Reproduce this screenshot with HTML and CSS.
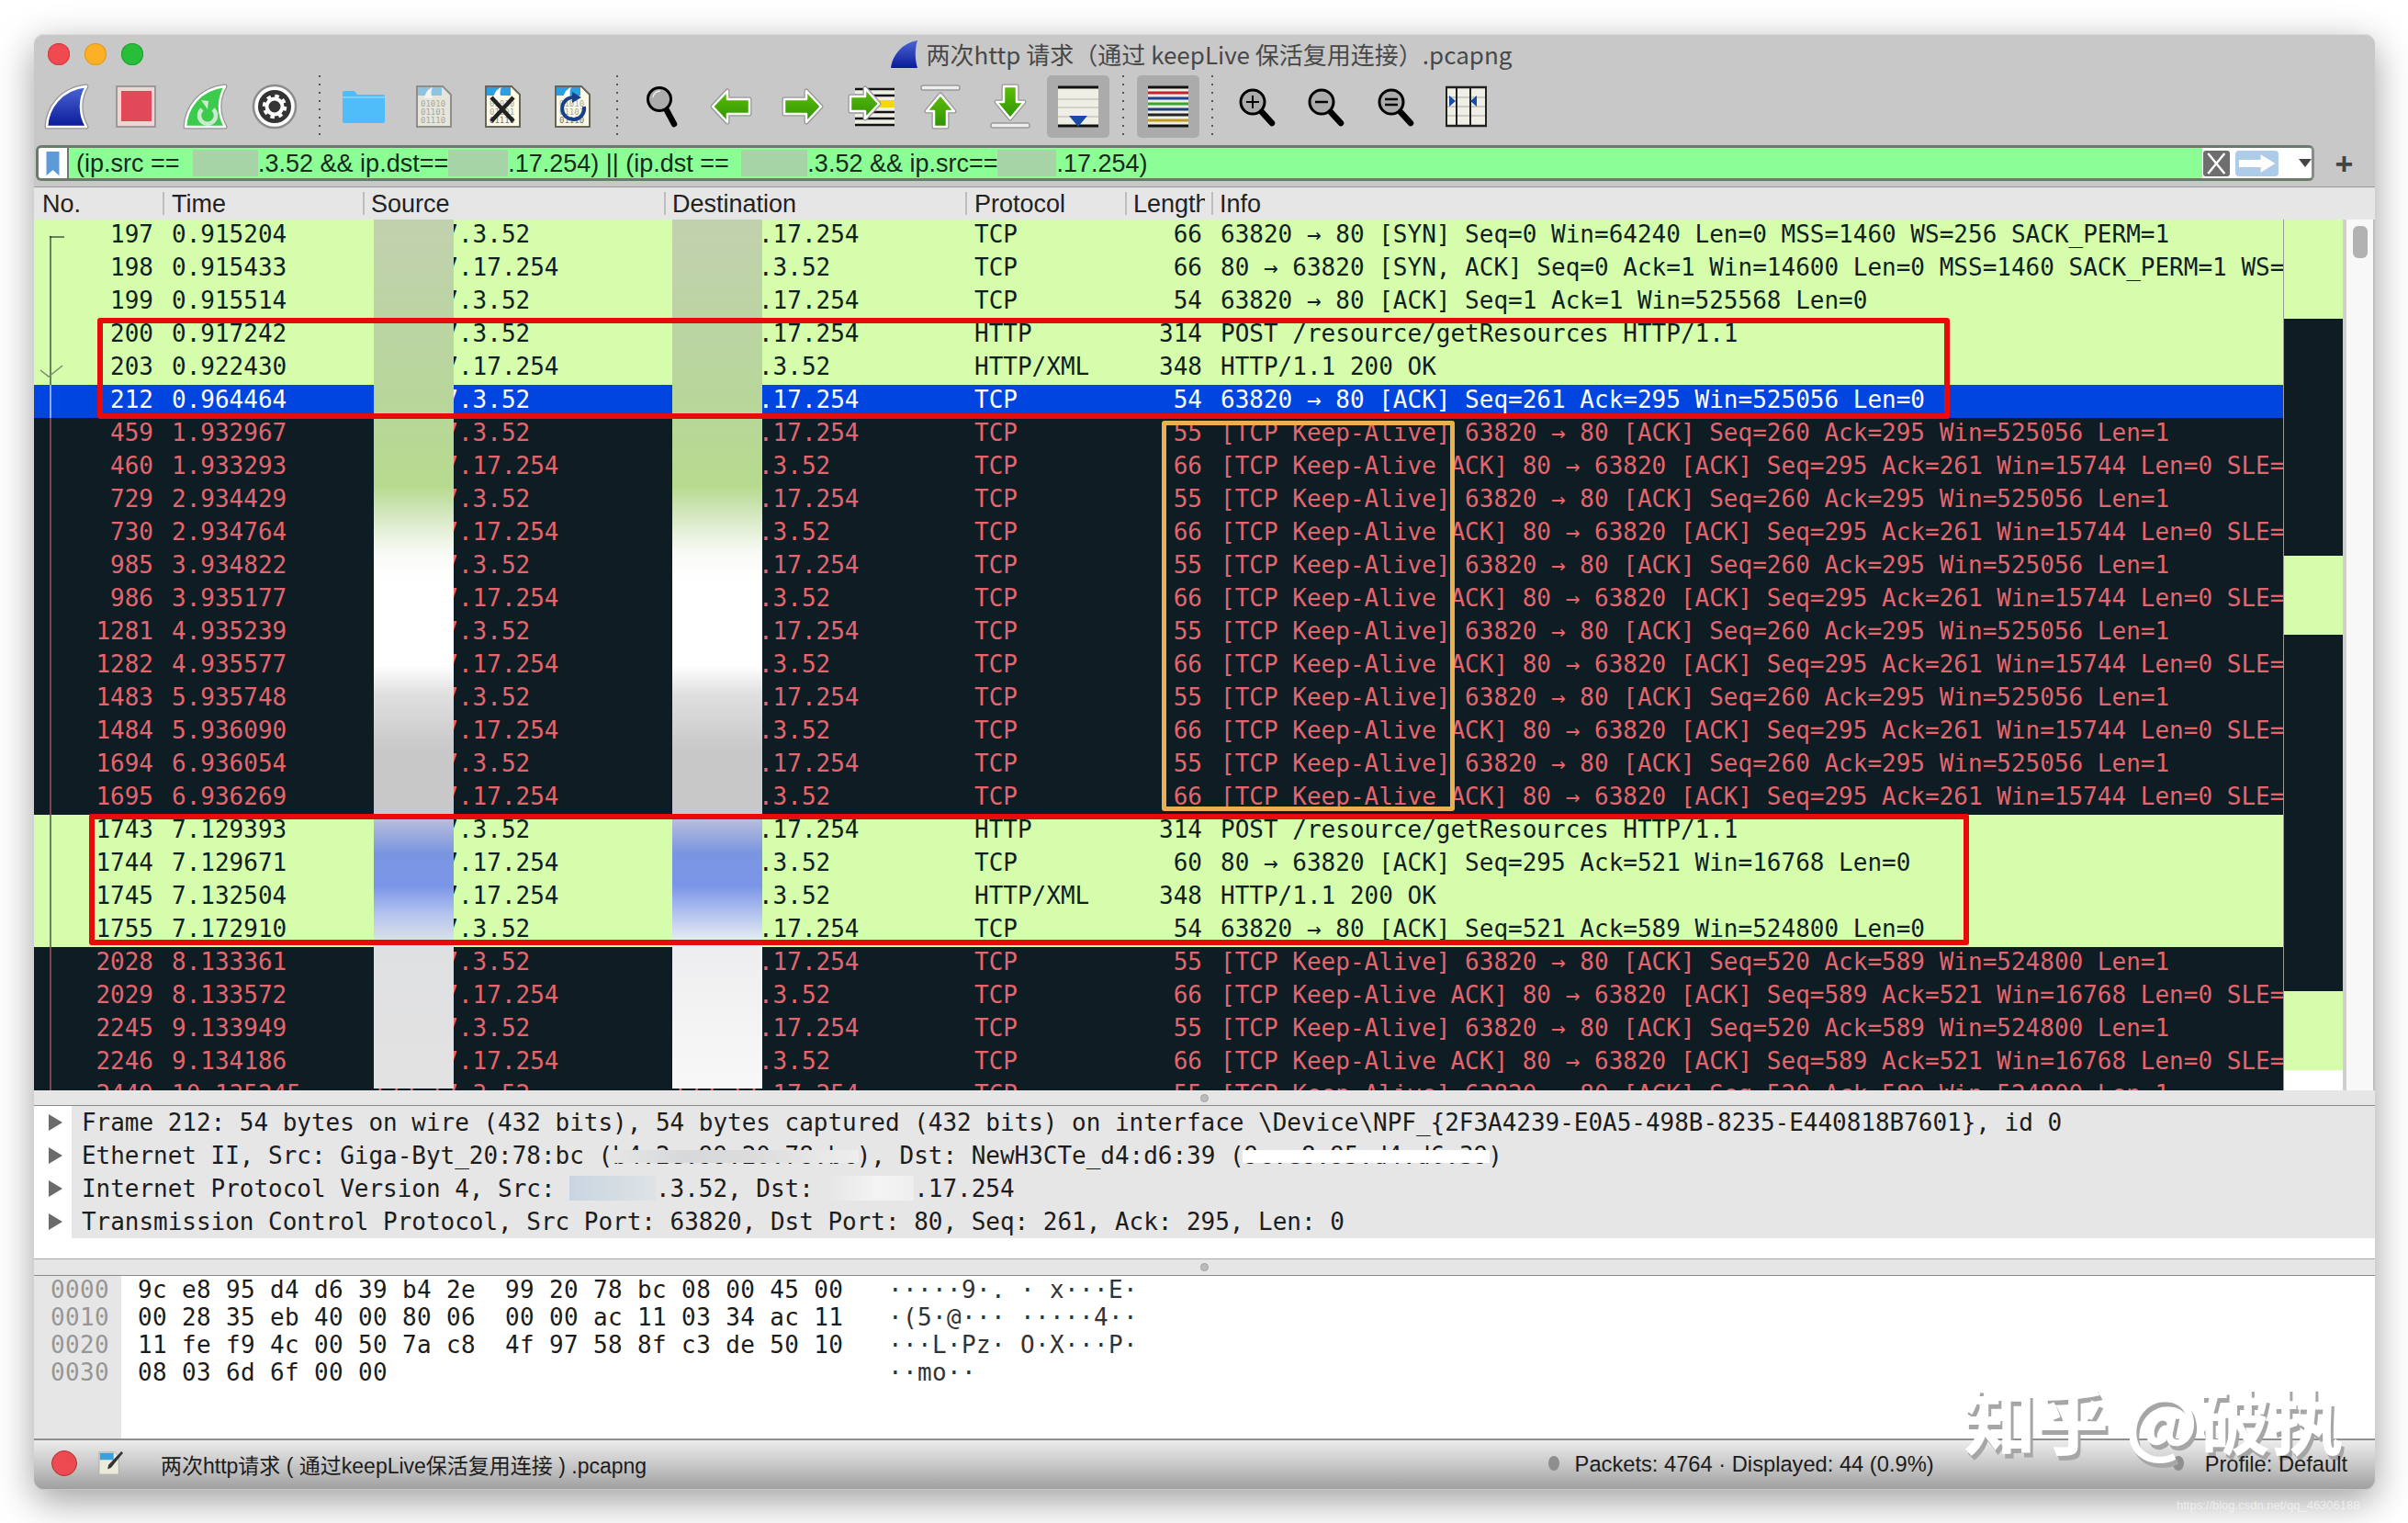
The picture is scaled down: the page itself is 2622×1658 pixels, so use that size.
FILE: index.html
```html
<!DOCTYPE html>
<html lang="en">
<head>
<meta charset="utf-8">
<title>Wireshark</title>
<link rel="stylesheet" href="styles.css">
</head>
<body>
<main class="window">
  <header class="titlebar">
    <div class="lights"><i class="light red"></i><i class="light amber"></i><i class="light green"></i></div>
    <div class="title">
      <svg class="title-fin" viewBox="0 0 32 32"><path d="M1 31C3 17 13 4 30 1c-3 10-3 20 0 30z" fill="url(#fin)"/></svg>
      <span>两次http 请求（通过 keepLive 保活复用连接）.pcapng</span>
    </div>
    <div></div>
  </header>

  <nav class="toolbar">
    <div class="btn"><svg viewBox="0 0 56 56"><defs>
      <linearGradient id="fin" x1="0" y1="0" x2="0" y2="1"><stop offset="0" stop-color="#4b66d4"/><stop offset="1" stop-color="#0b1b9a"/></linearGradient>
      <linearGradient id="go" x1="0" y1="0" x2="0" y2="1"><stop offset="0" stop-color="#5fbd0a"/><stop offset="1" stop-color="#2c9400"/></linearGradient>
    </defs>
      <path class="ao" d="M7 50C8 30 22 9 50 6c-8 14-8 30 0 44z"/><path class="fw" d="M7 50C8 30 22 9 50 6c-8 14-8 30 0 44z" fill="url(#fin)"/></svg></div>
    <div class="btn"><svg viewBox="0 0 56 56"><rect x="7" y="6" width="42" height="44" fill="#f0d5d5" stroke="#9a9a9a" stroke-width="2"/><rect x="12" y="11" width="33" height="33" fill="#e14858"/></svg></div>
    <div class="btn"><svg viewBox="0 0 56 56"><path class="ao" d="M7 50C8 30 22 9 50 6c-8 14-8 30 0 44z"/><path class="fw" d="M7 50C8 30 22 9 50 6c-8 14-8 30 0 44z" fill="#3ccb4c"/><path d="M25 31a9 9 0 1 0 12 0" fill="none" stroke="#cfe9cf" stroke-width="4.5"/><path d="M24 21l8 1-1 9z" fill="#cfe9cf"/></svg></div>
    <div class="btn"><svg viewBox="0 0 56 56"><circle cx="28" cy="28" r="23" fill="#fff" stroke="#8c8c8c" stroke-width="2.5"/><circle cx="28" cy="28" r="18" fill="#333"/><circle cx="28" cy="28" r="8.5" fill="none" stroke="#fff" stroke-width="4"/><circle cx="28" cy="28" r="11.5" fill="none" stroke="#fff" stroke-width="3.5" stroke-dasharray="4.5 4.53"/></svg></div>
    <div class="sep"></div>
    <div class="btn"><svg viewBox="0 0 56 56"><path d="M5 13a2 2 0 0 1 2-2h11l3 4h28a2 2 0 0 1 2 2v27a2 2 0 0 1-2 2H7a2 2 0 0 1-2-2z" fill="#4fbdf9"/><rect x="5" y="17" width="46" height="2" fill="#7dd0fb"/></svg></div>
    <div class="btn"><svg viewBox="0 0 56 56"><path d="M10 6h28l9 9v35H10z" fill="#e5e5dc" stroke="#8f8f87" stroke-width="2"/><path d="M11 7h26v9H11z" fill="#8fc4e0"/><path d="M18 19c1-6 4-10 9-12-2 4-2 8 0 12z" fill="#f2f2ee"/><text class="bits" x="14" y="28" fill="#a8a8a0">01010</text><text class="bits" x="14" y="37" fill="#a8a8a0">01101</text><text class="bits" x="14" y="46" fill="#a8a8a0">01110</text></svg></div>
    <div class="btn"><svg viewBox="0 0 56 56"><path d="M10 6h28l9 9v35H10z" fill="#fdfbe6" stroke="#66665c" stroke-width="2"/><path d="M11 7h26v9H11z" fill="#2a9fe2"/><path d="M18 19c1-6 4-10 9-12-2 4-2 8 0 12z" fill="#fff"/><text class="bits" x="14" y="28" fill="#a8a8a0">01010</text><text class="bits" x="14" y="37" fill="#a8a8a0">01101</text><text class="bits" x="14" y="46" fill="#777">01110</text><path d="M16 18l24 26M40 18L16 44" stroke="#222" stroke-width="4.5"/></svg></div>
    <div class="btn"><svg viewBox="0 0 56 56"><path d="M10 6h28l9 9v35H10z" fill="#fdfbe6" stroke="#66665c" stroke-width="2"/><path d="M11 7h26v9H11z" fill="#2a9fe2"/><path d="M18 19c1-6 4-10 9-12-2 4-2 8 0 12z" fill="#fff"/><text class="bits" x="14" y="28" fill="#a8a8a0">01010</text><text class="bits" x="14" y="37" fill="#a8a8a0">01101</text><text class="bits" x="14" y="46" fill="#777">01110</text><path d="M41 28a12 12 0 1 1-12-10" fill="none" stroke="#173f8a" stroke-width="4"/><path d="M28 12l10 6-10 6z" fill="#173f8a"/></svg></div>
    <div class="sep"></div>
    <div class="btn"><svg viewBox="0 0 56 56"><circle cx="26" cy="20" r="12.5" fill="#acacac" stroke="#000" stroke-width="3"/><path d="M19 18a8 8 0 0 1 8-7" fill="none" stroke="#eee" stroke-width="1.5"/><path d="M34 32l8 15" stroke="#000" stroke-width="6.5" stroke-linecap="round"/></svg></div>
    <div class="btn"><svg viewBox="0 0 56 56"><path class="ao" d="M8 28L24 11v9h24v16H24v9z"/><path class="ai" d="M8 28L24 11v9h24v16H24v9z"/></svg></div>
    <div class="btn"><svg viewBox="0 0 56 56"><path class="ao" d="M50 28L34 11v9H10v16h24v9z"/><path class="ai" d="M50 28L34 11v9H10v16h24v9z"/></svg></div>
    <div class="btn"><svg viewBox="0 0 56 56"><rect x="12" y="10" width="43" height="38" fill="#efefe6"/><path d="M12 9h43M12 16h43M12 41h43M12 48h43M12 34h43" stroke="#111" stroke-width="2.5"/><rect x="34" y="21" width="21" height="8" fill="#f6d80a"/><path class="ao" d="M38 25L23 8v9H7v16h16v8z"/><path class="ai" d="M38 25L23 8v9H7v16h16v8z"/></svg></div>
    <div class="btn"><svg viewBox="0 0 56 56"><rect x="8" y="5" width="42" height="5" rx="2" fill="#eee" stroke="#999" stroke-width="1.5"/><path class="ao" d="M29 15L14 33h8v17h14V33h8z"/><path class="ai" d="M29 15L14 33h8v17h14V33h8z"/></svg></div>
    <div class="btn"><svg viewBox="0 0 56 56"><rect x="8" y="46" width="42" height="5" rx="2" fill="#eee" stroke="#999" stroke-width="1.5"/><path class="ao" d="M29 41L14 23h8V6h14v17h8z"/><path class="ai" d="M29 41L14 23h8V6h14v17h8z"/></svg></div>
    <div class="btn on"><svg viewBox="0 0 56 56"><rect x="6" y="6" width="44" height="44" fill="#efefe6"/><path d="M6 7h44M6 49h44" stroke="#111" stroke-width="3"/><path d="M6 20h44M6 29h44M6 39h44" stroke="#c9c9c0" stroke-width="1.5"/><path d="M18 38h20l-10 12z" fill="#174da6"/></svg></div>
    <div class="sep"></div>
    <div class="btn on"><svg viewBox="0 0 56 56"><rect x="6" y="6" width="44" height="44" fill="#efefe6"/><path d="M6 7h44" stroke="#111" stroke-width="3"/><path d="M6 13h44" stroke="#c8202a" stroke-width="3"/><path d="M6 19h44" stroke="#1f3f9a" stroke-width="3"/><path d="M6 25h44" stroke="#3aa52b" stroke-width="3"/><path d="M6 31h44" stroke="#1f3f7a" stroke-width="3"/><path d="M6 37h44" stroke="#222" stroke-width="3"/><path d="M6 43h44" stroke="#c09a20" stroke-width="3"/><path d="M6 49h44" stroke="#111" stroke-width="3"/></svg></div>
    <div class="sep"></div>
    <div class="btn"><svg viewBox="0 0 56 56"><circle cx="23" cy="23" r="13" fill="#acacac" stroke="#000" stroke-width="3"/><path d="M16 23h14M23 16v14" stroke="#000" stroke-width="2"/><path d="M33 34l11 12" stroke="#000" stroke-width="6.5" stroke-linecap="round"/></svg></div>
    <div class="btn"><svg viewBox="0 0 56 56"><circle cx="23" cy="23" r="13" fill="#acacac" stroke="#000" stroke-width="3"/><path d="M16 23h14" stroke="#000" stroke-width="2.5"/><path d="M33 34l11 12" stroke="#000" stroke-width="6.5" stroke-linecap="round"/></svg></div>
    <div class="btn"><svg viewBox="0 0 56 56"><circle cx="23" cy="23" r="13" fill="#acacac" stroke="#000" stroke-width="3"/><path d="M16 20h14M16 26h14" stroke="#000" stroke-width="2.5"/><path d="M33 34l11 12" stroke="#000" stroke-width="6.5" stroke-linecap="round"/></svg></div>
    <div class="btn"><svg viewBox="0 0 56 56"><rect x="6" y="6" width="45" height="44" fill="#efefe6"/><path d="M6 7h45M6 49h45" stroke="#222" stroke-width="2.5"/><path d="M6 18h45M6 28h45M6 38h45" stroke="#c0c0b8" stroke-width="1.5"/><path d="M7 6v44M18 6v44M33 6v44M50 6v44" stroke="#222" stroke-width="2"/><path d="M10 16l7 6-7 6zM40 16l-7 6 7 6z" fill="#174da6"/></svg></div>
  </nav>

  <section class="filter-row">
    <div class="filter">
      <div class="bookmark"><svg viewBox="0 0 18 32"><path d="M1 1h16v30l-8-7-8 7z" fill="#5d9ad9"/></svg></div>
      <div class="expr">(ip.src == <span class="fmask m1">172.17</span>.3.52 &amp;&amp; ip.dst==<span class="fmask m2">172.17</span>.17.254) || (ip.dst == <span class="fmask m3">172.17</span>.3.52 &amp;&amp; ip.src==<span class="fmask m4">172.17</span>.17.254)</div>
      <div class="filter-tools">
        <span class="clear"><svg viewBox="0 0 28 28"><path d="M5 3l18 22M23 3L5 25" stroke="#fff" stroke-width="2.5"/></svg></span>
        <span class="apply"><svg viewBox="0 0 48 28"><path d="M4 10h24V4l16 10-16 10v-6H4z" fill="#fff"/></svg></span>
        <span class="drop"></span>
      </div>
    </div>
    <div class="plus">+</div>
  </section>

  <div class="thead">
    <div class="th c-no">No.</div>
    <div class="th c-time">Time</div>
    <div class="th c-src">Source</div>
    <div class="th c-dst">Destination</div>
    <div class="th c-proto">Protocol</div>
    <div class="th c-len">Length</div>
    <div class="th c-info">Info</div>
  </div>

  <section class="list">
    <div class="packets">
      <div class="row ok tree-start"><span class="c-no">197</span><span class="c-time">0.915204</span><span class="c-src">172.17.3.52</span><span class="c-dst">172.17.17.254</span><span class="c-proto">TCP</span><span class="c-len">66</span><span class="c-info">63820 → 80 [SYN] Seq=0 Win=64240 Len=0 MSS=1460 WS=256 SACK_PERM=1</span></div>
      <div class="row ok"><span class="c-no">198</span><span class="c-time">0.915433</span><span class="c-src">172.17.17.254</span><span class="c-dst">172.17.3.52</span><span class="c-proto">TCP</span><span class="c-len">66</span><span class="c-info">80 → 63820 [SYN, ACK] Seq=0 Ack=1 Win=14600 Len=0 MSS=1460 SACK_PERM=1 WS=256</span></div>
      <div class="row ok"><span class="c-no">199</span><span class="c-time">0.915514</span><span class="c-src">172.17.3.52</span><span class="c-dst">172.17.17.254</span><span class="c-proto">TCP</span><span class="c-len">54</span><span class="c-info">63820 → 80 [ACK] Seq=1 Ack=1 Win=525568 Len=0</span></div>
      <div class="row ok"><span class="c-no">200</span><span class="c-time">0.917242</span><span class="c-src">172.17.3.52</span><span class="c-dst">172.17.17.254</span><span class="c-proto">HTTP</span><span class="c-len">314</span><span class="c-info">POST /resource/getResources HTTP/1.1</span></div>
      <div class="row ok"><svg class="check" viewBox="0 0 26 14"><path d="M1 6l9 7L25 1" fill="none" stroke="#7a8a70" stroke-width="1.5"/></svg><span class="c-no">203</span><span class="c-time">0.922430</span><span class="c-src">172.17.17.254</span><span class="c-dst">172.17.3.52</span><span class="c-proto">HTTP/XML</span><span class="c-len">348</span><span class="c-info">HTTP/1.1 200 OK</span></div>
      <div class="row sel"><span class="c-no">212</span><span class="c-time">0.964464</span><span class="c-src">172.17.3.52</span><span class="c-dst">172.17.17.254</span><span class="c-proto">TCP</span><span class="c-len">54</span><span class="c-info">63820 → 80 [ACK] Seq=261 Ack=295 Win=525056 Len=0</span></div>
      <div class="row bad"><span class="c-no">459</span><span class="c-time">1.932967</span><span class="c-src">172.17.3.52</span><span class="c-dst">172.17.17.254</span><span class="c-proto">TCP</span><span class="c-len">55</span><span class="c-info">[TCP Keep-Alive] 63820 → 80 [ACK] Seq=260 Ack=295 Win=525056 Len=1</span></div>
      <div class="row bad"><span class="c-no">460</span><span class="c-time">1.933293</span><span class="c-src">172.17.17.254</span><span class="c-dst">172.17.3.52</span><span class="c-proto">TCP</span><span class="c-len">66</span><span class="c-info">[TCP Keep-Alive ACK] 80 → 63820 [ACK] Seq=295 Ack=261 Win=15744 Len=0 SLE=260 SRE=261</span></div>
      <div class="row bad"><span class="c-no">729</span><span class="c-time">2.934429</span><span class="c-src">172.17.3.52</span><span class="c-dst">172.17.17.254</span><span class="c-proto">TCP</span><span class="c-len">55</span><span class="c-info">[TCP Keep-Alive] 63820 → 80 [ACK] Seq=260 Ack=295 Win=525056 Len=1</span></div>
      <div class="row bad"><span class="c-no">730</span><span class="c-time">2.934764</span><span class="c-src">172.17.17.254</span><span class="c-dst">172.17.3.52</span><span class="c-proto">TCP</span><span class="c-len">66</span><span class="c-info">[TCP Keep-Alive ACK] 80 → 63820 [ACK] Seq=295 Ack=261 Win=15744 Len=0 SLE=260 SRE=261</span></div>
      <div class="row bad"><span class="c-no">985</span><span class="c-time">3.934822</span><span class="c-src">172.17.3.52</span><span class="c-dst">172.17.17.254</span><span class="c-proto">TCP</span><span class="c-len">55</span><span class="c-info">[TCP Keep-Alive] 63820 → 80 [ACK] Seq=260 Ack=295 Win=525056 Len=1</span></div>
      <div class="row bad"><span class="c-no">986</span><span class="c-time">3.935177</span><span class="c-src">172.17.17.254</span><span class="c-dst">172.17.3.52</span><span class="c-proto">TCP</span><span class="c-len">66</span><span class="c-info">[TCP Keep-Alive ACK] 80 → 63820 [ACK] Seq=295 Ack=261 Win=15744 Len=0 SLE=260 SRE=261</span></div>
      <div class="row bad"><span class="c-no">1281</span><span class="c-time">4.935239</span><span class="c-src">172.17.3.52</span><span class="c-dst">172.17.17.254</span><span class="c-proto">TCP</span><span class="c-len">55</span><span class="c-info">[TCP Keep-Alive] 63820 → 80 [ACK] Seq=260 Ack=295 Win=525056 Len=1</span></div>
      <div class="row bad"><span class="c-no">1282</span><span class="c-time">4.935577</span><span class="c-src">172.17.17.254</span><span class="c-dst">172.17.3.52</span><span class="c-proto">TCP</span><span class="c-len">66</span><span class="c-info">[TCP Keep-Alive ACK] 80 → 63820 [ACK] Seq=295 Ack=261 Win=15744 Len=0 SLE=260 SRE=261</span></div>
      <div class="row bad"><span class="c-no">1483</span><span class="c-time">5.935748</span><span class="c-src">172.17.3.52</span><span class="c-dst">172.17.17.254</span><span class="c-proto">TCP</span><span class="c-len">55</span><span class="c-info">[TCP Keep-Alive] 63820 → 80 [ACK] Seq=260 Ack=295 Win=525056 Len=1</span></div>
      <div class="row bad"><span class="c-no">1484</span><span class="c-time">5.936090</span><span class="c-src">172.17.17.254</span><span class="c-dst">172.17.3.52</span><span class="c-proto">TCP</span><span class="c-len">66</span><span class="c-info">[TCP Keep-Alive ACK] 80 → 63820 [ACK] Seq=295 Ack=261 Win=15744 Len=0 SLE=260 SRE=261</span></div>
      <div class="row bad"><span class="c-no">1694</span><span class="c-time">6.936054</span><span class="c-src">172.17.3.52</span><span class="c-dst">172.17.17.254</span><span class="c-proto">TCP</span><span class="c-len">55</span><span class="c-info">[TCP Keep-Alive] 63820 → 80 [ACK] Seq=260 Ack=295 Win=525056 Len=1</span></div>
      <div class="row bad"><span class="c-no">1695</span><span class="c-time">6.936269</span><span class="c-src">172.17.17.254</span><span class="c-dst">172.17.3.52</span><span class="c-proto">TCP</span><span class="c-len">66</span><span class="c-info">[TCP Keep-Alive ACK] 80 → 63820 [ACK] Seq=295 Ack=261 Win=15744 Len=0 SLE=260 SRE=261</span></div>
      <div class="row ok"><span class="c-no">1743</span><span class="c-time">7.129393</span><span class="c-src">172.17.3.52</span><span class="c-dst">172.17.17.254</span><span class="c-proto">HTTP</span><span class="c-len">314</span><span class="c-info">POST /resource/getResources HTTP/1.1</span></div>
      <div class="row ok"><span class="c-no">1744</span><span class="c-time">7.129671</span><span class="c-src">172.17.17.254</span><span class="c-dst">172.17.3.52</span><span class="c-proto">TCP</span><span class="c-len">60</span><span class="c-info">80 → 63820 [ACK] Seq=295 Ack=521 Win=16768 Len=0</span></div>
      <div class="row ok"><span class="c-no">1745</span><span class="c-time">7.132504</span><span class="c-src">172.17.17.254</span><span class="c-dst">172.17.3.52</span><span class="c-proto">HTTP/XML</span><span class="c-len">348</span><span class="c-info">HTTP/1.1 200 OK</span></div>
      <div class="row ok"><span class="c-no">1755</span><span class="c-time">7.172910</span><span class="c-src">172.17.3.52</span><span class="c-dst">172.17.17.254</span><span class="c-proto">TCP</span><span class="c-len">54</span><span class="c-info">63820 → 80 [ACK] Seq=521 Ack=589 Win=524800 Len=0</span></div>
      <div class="row bad"><span class="c-no">2028</span><span class="c-time">8.133361</span><span class="c-src">172.17.3.52</span><span class="c-dst">172.17.17.254</span><span class="c-proto">TCP</span><span class="c-len">55</span><span class="c-info">[TCP Keep-Alive] 63820 → 80 [ACK] Seq=520 Ack=589 Win=524800 Len=1</span></div>
      <div class="row bad"><span class="c-no">2029</span><span class="c-time">8.133572</span><span class="c-src">172.17.17.254</span><span class="c-dst">172.17.3.52</span><span class="c-proto">TCP</span><span class="c-len">66</span><span class="c-info">[TCP Keep-Alive ACK] 80 → 63820 [ACK] Seq=589 Ack=521 Win=16768 Len=0 SLE=520 SRE=521</span></div>
      <div class="row bad"><span class="c-no">2245</span><span class="c-time">9.133949</span><span class="c-src">172.17.3.52</span><span class="c-dst">172.17.17.254</span><span class="c-proto">TCP</span><span class="c-len">55</span><span class="c-info">[TCP Keep-Alive] 63820 → 80 [ACK] Seq=520 Ack=589 Win=524800 Len=1</span></div>
      <div class="row bad"><span class="c-no">2246</span><span class="c-time">9.134186</span><span class="c-src">172.17.17.254</span><span class="c-dst">172.17.3.52</span><span class="c-proto">TCP</span><span class="c-len">66</span><span class="c-info">[TCP Keep-Alive ACK] 80 → 63820 [ACK] Seq=589 Ack=521 Win=16768 Len=0 SLE=520 SRE=521</span></div>
      <div class="row bad"><span class="c-no">2449</span><span class="c-time">10.135245</span><span class="c-src">172.17.3.52</span><span class="c-dst">172.17.17.254</span><span class="c-proto">TCP</span><span class="c-len">55</span><span class="c-info">[TCP Keep-Alive] 63820 → 80 [ACK] Seq=520 Ack=589 Win=524800 Len=1</span></div>
      <div class="smudge smudge-src"></div>
      <div class="smudge smudge-dst"></div>
    </div>
    <div class="minimap"><i class="mm g1"></i><i class="mm d1"></i><i class="mm g2"></i><i class="mm d2"></i><i class="mm g3"></i><i class="mm w1"></i></div>
    <div class="scroll"><i class="thumb"></i></div>
  </section>

  <div class="splitter"><i></i></div>

  <section class="details">
    <div class="drow"><span class="twist"></span><span class="dtext">Frame 212: 54 bytes on wire (432 bits), 54 bytes captured (432 bits) on interface \Device\NPF_{2F3A4239-E0A5-498B-8235-E440818B7601}, id 0</span></div>
    <div class="drow"><span class="twist"></span><span class="dtext">Ethernet II, Src: Giga-Byt_20:78:bc (<span class="smear s-grey">b4:2e:99:20:78:bc</span>), Dst: NewH3CTe_d4:d6:39 (<span class="smear s-white">9c:e8:95:d4:d6:39</span>)</span></div>
    <div class="drow"><span class="twist"></span><span class="dtext">Internet Protocol Version 4, Src: <span class="ipmask ip-a">172.17</span>.3.52, Dst: <span class="ipmask ip-b">172.17</span>.17.254</span></div>
    <div class="drow"><span class="twist"></span><span class="dtext">Transmission Control Protocol, Src Port: 63820, Dst Port: 80, Seq: 261, Ack: 295, Len: 0</span></div>
  </section>

  <div class="splitter second"><i></i></div>

  <section class="hex">
    <div class="offsets"><div>0000</div><div>0010</div><div>0020</div><div>0030</div></div>
    <div class="bytes"><div>9c e8 95 d4 d6 39 b4 2e  99 20 78 bc 08 00 45 00</div><div>00 28 35 eb 40 00 80 06  00 00 ac 11 03 34 ac 11</div><div>11 fe f9 4c 00 50 7a c8  4f 97 58 8f c3 de 50 10</div><div>08 03 6d 6f 00 00</div></div>
    <div class="ascii"><div>·····9·. · x···E·</div><div>·(5·@··· ·····4··</div><div>···L·Pz· O·X···P·</div><div>··mo··</div></div>
  </section>

  <footer class="status">
    <i class="rec"></i>
    <svg class="note" viewBox="0 0 30 30"><path d="M2 2h18l5 5v21H2z" fill="#eceadb" stroke="#aaa"/><path d="M3 3h16v8H3z" fill="#3aa0e0"/><path d="M28 1l2 2-14 17-4 2 1-5z" fill="#333"/></svg>
    <span class="file">两次http请求 ( 通过keepLive保活复用连接 ) .pcapng</span>
    <span class="spacer"></span>
    <i class="pip"></i>
    <span class="counts">Packets: 4764 · Displayed: 44 (0.9%)</span>
    <i class="pip second-pip"></i>
    <span class="profile">Profile: Default</span>
  </footer>

  <div class="mark mark-a"></div>
  <div class="mark mark-b"></div>
  <div class="mark mark-c"></div>
  <div class="watermark">知乎 @破执</div>
</main>
<div class="url">https://blog.csdn.net/qq_46306188</div>
</body>
</html>
```

FILE: styles.css
```css
* { box-sizing: border-box; }
html, body { margin: 0; padding: 0; background: #fff; }
body { width: 2622px; height: 1658px; overflow: hidden; position: relative; padding: 37px 0 0 37px; font-family: "Liberation Sans", "Noto Sans CJK SC", sans-serif; }

.window { position: relative; width: 2549px; height: 1585px; display: flex; flex-direction: column; background: #c8c8c8; border-radius: 11px; box-shadow: 0 12px 42px rgba(0,0,0,.38); }

.titlebar { height: 42px; flex: none; display: grid; grid-template-columns: 1fr auto 1fr; align-items: center; border-radius: 11px 11px 0 0; border-top: 1px solid #dedede; }
.lights { display: flex; gap: 16px; padding-left: 15px; }
.light { width: 24px; height: 24px; border-radius: 50%; display: block; }
.red { background: #f04a50; box-shadow: inset 0 0 0 1px #d23c40; }
.amber { background: #fdb025; box-shadow: inset 0 0 0 1px #dc9a1f; }
.green { background: #28be3a; box-shadow: inset 0 0 0 1px #1fa02f; }
.title { display: flex; align-items: center; gap: 8px; font: 26px/34px "Noto Sans CJK SC", sans-serif; color: #484848; margin-left: -8px; }
.title-fin { width: 32px; height: 32px; }

.toolbar { height: 79px; flex: none; display: flex; gap: 7.65px; padding: 3px 0 0 1px; align-items: flex-start; }
.btn { width: 68px; height: 68px; display: flex; align-items: center; justify-content: center; border-radius: 5px; flex: none; }
.btn svg { width: 56px; height: 56px; }
.btn.on { background: #ababab; }
.sep { width: 14px; height: 68px; flex: none; background: repeating-linear-gradient(#555 0 2px, transparent 2px 9px) center / 2px 100% no-repeat; }
.ao { fill: none; stroke: #969696; stroke-width: 5; stroke-linejoin: round; }
.ai { fill: url(#go); stroke: #fff; stroke-width: 2.5; stroke-linejoin: round; }
.fw { stroke: #fff; stroke-width: 2.5; stroke-linejoin: round; }
.bits { font: 9px "DejaVu Sans Mono", monospace; }

.filter-row { height: 39px; flex: none; display: flex; align-items: center; padding-left: 2px; margin-bottom: 6px; }
.filter { width: 2481px; height: 39px; display: flex; border: 3px solid #6b7a6b; border-right-color: #8a8a8a; border-radius: 6px; background: #8bff96; overflow: hidden; }
.bookmark { width: 33px; flex: none; background: #fff; border-right: 2px solid #6b7a6b; display: flex; align-items: center; justify-content: center; }
.bookmark svg { width: 17px; height: 28px; }
.expr { flex: 1; padding-left: 8px; font-size: 27px; line-height: 34px; color: #1a2a1a; white-space: pre; }
.fmask { display: inline-block; height: 29px; line-height: 29px; font-size: 21px; text-align: center; vertical-align: top; margin-top: 2px; background: #a6d4a6; color: transparent; }
.m1 { width: 71px; margin-left: 7px; }
.m2 { width: 65px; }
.m3 { width: 72px; margin-left: 6px; }
.m4 { width: 64px; }
.filter-tools { width: 119px; flex: none; background: #fff; display: flex; align-items: center; gap: 6px; padding-left: 1px; }
.clear { width: 29px; height: 28px; background: #6e6e6e; border-radius: 3px; display: flex; }
.apply { width: 48px; height: 28px; background: #aecbe8; border-radius: 4px; display: flex; }
.clear svg, .apply svg { width: 100%; height: 100%; }
.drop { width: 0; height: 0; margin-left: 16px; border: 7px solid transparent; border-top: 9px solid #444; border-bottom: 0; }
.plus { width: 65px; text-align: center; font: bold 34px/34px "Liberation Sans", sans-serif; color: #444; }

.thead { height: 36px; flex: none; display: flex; background: #e6e6e6; border-top: 1px solid #9a9a9a; font-size: 27px; line-height: 37px; color: #222; overflow: hidden; }
.th { position: relative; flex: none; overflow: hidden; white-space: nowrap; }
.th + .th::before { content: ""; position: absolute; left: 0; top: 5px; bottom: 5px; width: 2px; background: #bdbdbd; }
.c-no { flex: none; width: 140px; }
.c-time { flex: none; width: 218px; padding-left: 10px; }
.c-src, .c-dst { flex: none; width: 328px; padding-left: 9px; }
.c-proto { flex: none; width: 174px; padding-left: 10px; }
.c-len { flex: none; width: 94px; }
.c-info { flex: none; width: 1168px; padding-left: 10px; }
.th.c-no { padding-left: 9px; }
.th.c-len { padding-left: 9px; }
.th.c-info { width: 1267px; padding-left: 9px; background: #e6e6e6; box-shadow: -7px 0 0 #e6e6e6; }

.list { height: 948px; flex: none; display: flex; background: #fff; overflow: hidden; }
.packets { position: relative; width: 2449px; flex: none; overflow: hidden; font: 26px/36px "DejaVu Sans Mono", monospace; }
.row { position: relative; display: flex; height: 36px; white-space: pre; line-height: 33px; }
.row > span { overflow: hidden; }
.row .c-no { text-align: right; padding-right: 10px; }
.row .c-len { text-align: right; padding-right: 10px; }
.row .c-src { padding-left: 10px; }
.row::before { content: ""; position: absolute; left: 17px; top: 0; bottom: 0; width: 2px; background: currentColor; opacity: .55; }
.tree-start::before { top: 18px; }
.tree-start::after { content: ""; position: absolute; left: 17px; top: 18px; width: 16px; height: 2px; background: currentColor; opacity: .55; }
.ok { background: #d6fdab; color: #0e1f22; }
.bad { background: #0e1c23; color: #e3656e; }
.sel { background: #0045e0; color: #fff; }
.check { position: absolute; left: 6px; top: 14px; width: 26px; height: 14px; }
.smudge { position: absolute; top: 0; height: 946px; }
.smudge-src { left: 370px; width: 87px; background: linear-gradient(#c2d1ae 0, #bcd4a4 100px, #b8d69b 190px, #b6da8e 290px, #d8e9c5 325px, #f8faf5 362px, #fff 392px, #fff 485px, #e0e0e0 516px, #c8c8c8 578px, #c8c8ca 648px, #b5bcdc 655px, #7a95e0 690px, #7a95e8 725px, #b5c5ef 757px, #dfe1e6 787px, #dfe0e2 796px, #e2e2e2 946px); }
.smudge-dst { left: 695px; width: 98px; background: linear-gradient(#c2d1ae 0, #bcd4a4 100px, #b8d69b 190px, #b6da8e 290px, #d8e9c5 325px, #f8faf5 362px, #fff 392px, #fff 485px, #e0e0e0 516px, #c8c8c8 578px, #c8c8ca 648px, #b5bcdc 655px, #7a95e0 690px, #7a95e8 725px, #b5c5ef 757px, #eceef3 787px, #eeeef0 796px, #f8f8f8 946px); }

.minimap { width: 65px; flex: none; border-left: 1px solid #9a9a9a; display: flex; flex-direction: column; }
.mm { display: block; flex: none; }
.g1 { height: 108px; background: #d6fdab; }
.d1 { height: 258px; background: #0e1c23; }
.g2 { height: 86px; background: #d6fdab; }
.d2 { height: 388px; background: #0e1c23; }
.g3 { height: 86px; background: #d6fdab; }
.w1 { height: 22px; background: #fff; }
.scroll { width: 35px; flex: none; border-left: 4px solid #cfcfcf; border-right: 2px solid #bdbdbd; background: #f8f8f8; padding: 7px 0 0 7px; }
.thumb { display: block; width: 16px; height: 35px; background: #b2b2b2; border-radius: 6px; }

.splitter { height: 16px; flex: none; background: #e6e6e6; display: flex; align-items: center; justify-content: center; }
.splitter i { width: 9px; height: 9px; border-radius: 50%; background: #bbb; border: 1px solid #a0a0a0; display: block; }
.splitter.second { height: 17px; }

.details { height: 168px; flex: none; background: #fff; border-top: 1px solid #8a8a8a; border-bottom: 1px solid #a8a8a8; font: 26px/36px "DejaVu Sans Mono", monospace; color: #1c1c1c; padding-bottom: 21px; letter-spacing: -.03px; }
.drow { height: 36px; display: flex; white-space: pre; line-height: 37px; }
.twist { width: 41px; flex: none; display: flex; align-items: center; padding: 0 0 0 16px; }
.twist::before { content: ""; border-left: 15px solid #6a6a6a; border-top: 9px solid transparent; border-bottom: 9px solid transparent; }
.dtext { flex: 1; background: #e6e6e6; padding-left: 11px; overflow: hidden; }
.smear { position: relative; display: inline-block; }
.smear::after { content: ""; position: absolute; left: -2px; right: -2px; top: 12px; bottom: 11px; }
.s-grey::after { background: linear-gradient(90deg, #e6e6e6, #d6d8da 30%, #ddd 60%, #eee); }
.s-white::after { background: #fff; }
.ipmask { color: transparent; display: inline-block; height: 27px; line-height: 27px; vertical-align: top; margin-top: 4px; }
.ip-a { background: linear-gradient(90deg, #c8d5e0, #dfe3e6); }
.ip-b { background: linear-gradient(90deg, #e6e6e6, #f4f4f4 60%, #eee); }

.hex { height: 178px; flex: none; display: flex; background: #fff; border-top: 1px solid #8a8a8a; font: 26px/30px "DejaVu Sans Mono", monospace; letter-spacing: .35px; color: #1c1c1c; white-space: pre; }
.hex > div > div { height: 30px; line-height: 31px; }
.offsets { width: 95px; flex: none; background: #e6e6e6; padding-left: 18px; color: #969696; }
.bytes { width: 835px; flex: none; padding-left: 18px; }
.ascii { flex: none; color: #333; }

.status { height: 55px; flex: none; display: flex; align-items: center; border-top: 2px solid #8f8f8f; border-radius: 0 0 11px 11px; background: linear-gradient(#ececec, #c4c4c4 55%, #a0a0a0); font-size: 23.7px; color: #1c1c1c; padding-bottom: 4px; }
.rec { width: 28px; height: 28px; border-radius: 50%; margin-left: 19px; background: #ec4a50; border: 1px solid #a33; }
.note { width: 28px; height: 28px; margin-left: 22px; }
.file { margin-left: 41px; margin-top: 3px; font-size: 23px; white-space: pre; font-family: "Liberation Sans", "Noto Sans CJK SC", sans-serif; }
.spacer { flex: 1; }
.pip { width: 12px; height: 16px; border-radius: 50%; background: #8e8e8e; }
.counts { margin-left: 17px; margin-top: 3px; white-space: pre; }
.second-pip { margin-left: 260px; }
.profile { margin-left: 23px; margin-right: 30px; margin-top: 3px; white-space: pre; position: relative; z-index: 2; }

.mark { position: absolute; pointer-events: none; border-radius: 3px; }
.mark-a { left: 69px; top: 309px; width: 2017px; height: 110px; border: 6px solid #e90b0b; }
.mark-b { left: 60px; top: 849px; width: 2047px; height: 143px; border: 6px solid #e90b0b; }
.mark-c { left: 1228px; top: 421px; width: 319px; height: 425px; border: 5px solid #e9af50; }
.watermark { position: absolute; left: 2101px; top: 1462px; font: 700 79px/90px "Noto Sans CJK SC", sans-serif; color: #fff; text-shadow: 3px 5px 0 #a6a6a6; white-space: pre; z-index: 1; }
.url { position: absolute; left: 2370px; top: 1631px; font: 13px/16px "Liberation Sans", sans-serif; color: rgba(255,255,255,.6); white-space: nowrap; }
```
